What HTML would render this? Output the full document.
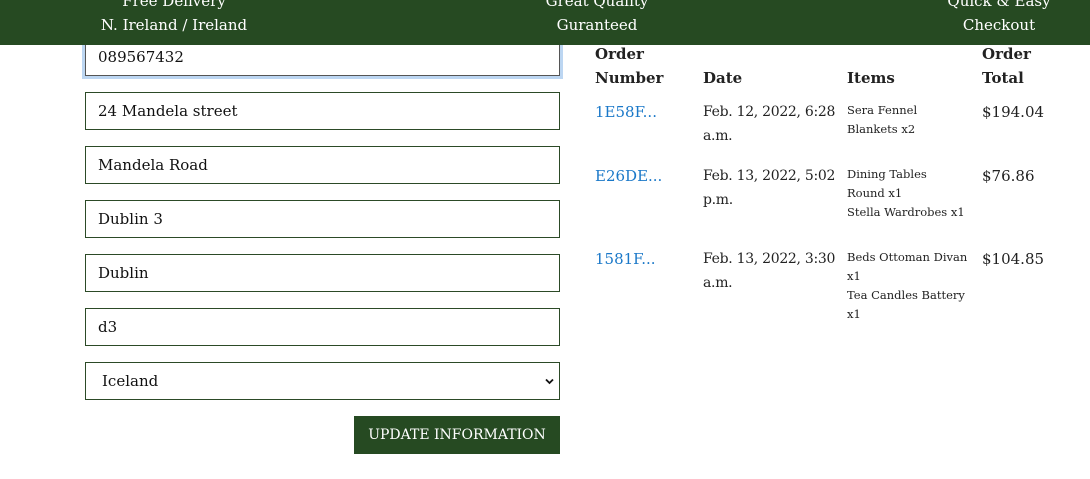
<!DOCTYPE html>
<html><head><style>
*{margin:0;padding:0;box-sizing:border-box}
body{width:1090px;height:479px;overflow:hidden;background:#fff;font-family:"DejaVu Serif","Liberation Serif",serif;color:#222;position:relative}
.hdr{position:absolute;left:0;top:0;width:1090px;height:45px;background:#264a22;color:#fff;font-size:15px;z-index:2}
.hdr div{position:absolute;text-align:center;line-height:24px;top:-11px;width:300px}
.in{position:absolute;left:85px;width:475px;height:38px;border:1px solid #2c4a27;background:#fff;font-size:15px;line-height:36px;padding-left:12px;color:#111}
.a{position:absolute;font-size:15px;line-height:24px}
.d{font-size:14px;letter-spacing:-0.3px}
.b{font-weight:bold}
.l{color:#1a78c8}
.s{position:absolute;font-size:11.5px;line-height:19px}
</style></head><body>
<div class="hdr">
<div style="left:24px">Free Delivery<br>N. Ireland / Ireland</div>
<div style="left:447px">Great Quality<br>Guranteed</div>
<div style="left:849px">Quick &amp; Easy<br>Checkout</div>
</div>
<div class="in" style="top:38px;box-shadow:0 0 0 3px #bcd6f2;border-color:#555">089567432</div>
<div class="in" style="top:92px">24 Mandela street</div>
<div class="in" style="top:146px">Mandela Road</div>
<div class="in" style="top:200px">Dublin 3</div>
<div class="in" style="top:254px">Dublin</div>
<div class="in" style="top:308px">d3</div>
<div class="in" style="top:362px;padding-left:16px">Iceland<svg style="position:absolute;right:5px;top:15px" width="9" height="7" viewBox="0 0 9 7"><path d="M1 1.5L4.5 5L8 1.5" stroke="#111" stroke-width="1.8" fill="none"/></svg></div>
<div style="position:absolute;left:354px;top:416px;width:206px;height:38px;background:#264a22;color:#fff;font-size:14px;line-height:38px;text-align:center">UPDATE INFORMATION</div>

<div class="a b" style="left:595px;top:42px">Order<br>Number</div>
<div class="a b" style="left:703px;top:66px">Date</div>
<div class="a b" style="left:847px;top:66px">Items</div>
<div class="a b" style="left:982px;top:42px">Order<br>Total</div>

<div class="a l" style="left:595px;top:100px">1E58F...</div>
<div class="a d" style="left:703px;top:100px">Feb. 12, 2022, 6:28<br>a.m.</div>
<div class="s" style="left:847px;top:101px">Sera Fennel<br>Blankets x2</div>
<div class="a" style="left:982px;top:100px">$194.04</div>

<div class="a l" style="left:595px;top:164px">E26DE...</div>
<div class="a d" style="left:703px;top:164px">Feb. 13, 2022, 5:02<br>p.m.</div>
<div class="s" style="left:847px;top:165px">Dining Tables<br>Round x1<br>Stella Wardrobes x1</div>
<div class="a" style="left:982px;top:164px">$76.86</div>

<div class="a l" style="left:595px;top:247px">1581F...</div>
<div class="a d" style="left:703px;top:247px">Feb. 13, 2022, 3:30<br>a.m.</div>
<div class="s" style="left:847px;top:248px">Beds Ottoman Divan<br>x1<br>Tea Candles Battery<br>x1</div>
<div class="a" style="left:982px;top:247px">$104.85</div>
</body></html>
